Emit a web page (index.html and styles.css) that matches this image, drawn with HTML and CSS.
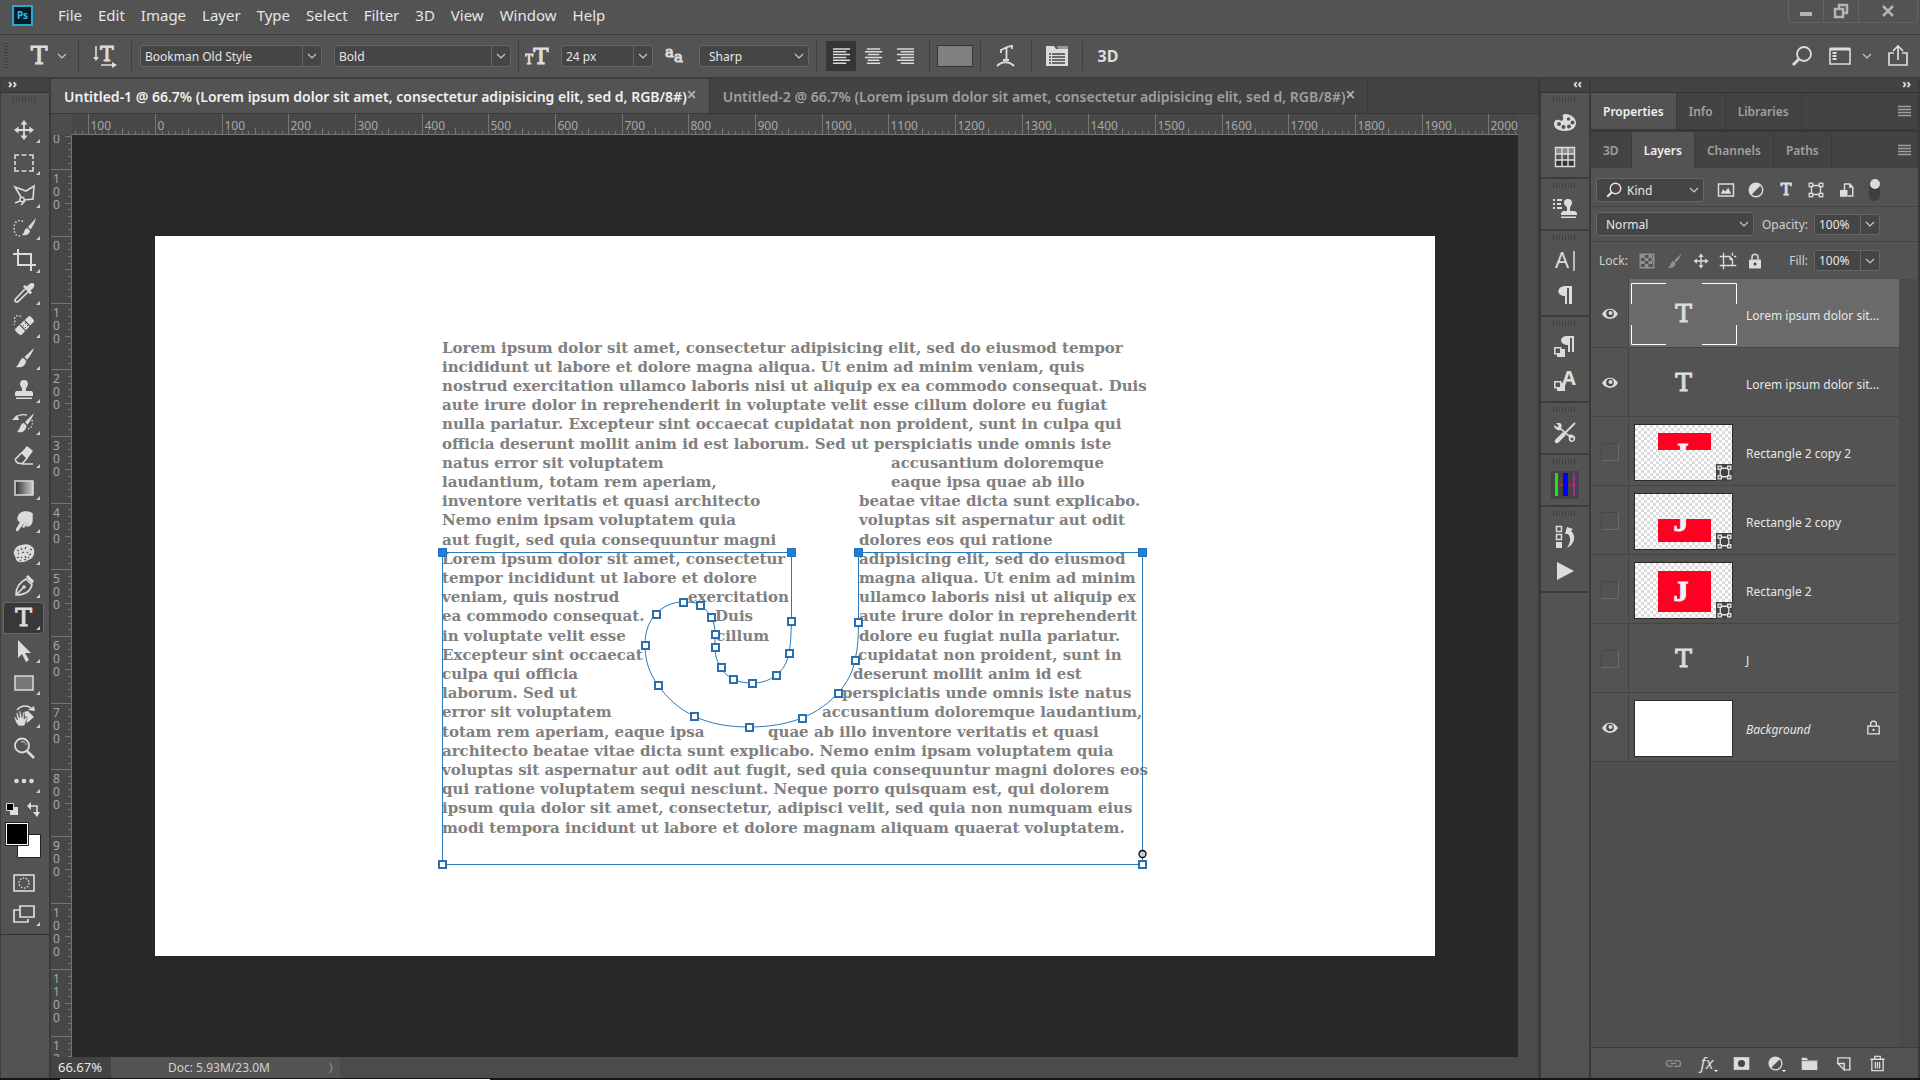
FILE: index.html
```html
<!DOCTYPE html>
<html lang="en">
<head>
    <meta charset="utf-8">
    <title>Untitled-1 - Photoshop</title>
    <link rel="stylesheet" href="styles.css">
</head>
<body>
    <!-- Icon sprite -->
    <svg class="sprite" aria-hidden="true">
        <symbol id="i-chev" viewBox="0 0 10 10"><path d="M1 3l4 4 4-4" fill="none" stroke="currentColor" stroke-width="1.2"/></symbol>
        <symbol id="i-menu" viewBox="0 0 14 12"><path d="M0 1.5h13M0 4.5h13M0 7.5h13M0 10.5h13" stroke="currentColor" stroke-width="1.6"/></symbol>
        <symbol id="i-move" viewBox="0 0 24 24"><path d="M12 4v16M4 12h16" stroke="currentColor" stroke-width="1.8"/><path d="M12 2l3.5 4.5h-7zM12 22l-3.500-4.500h7zM2 12l4.500-3.500v7zM22 12l-4.500 3.500v-7z" fill="currentColor"/></symbol>
        <symbol id="i-marquee" viewBox="0 0 24 24"><path d="M3 8V4h4M9.500 4h5M17 4h4v4M21 10v4M21 16v4h-4M14.500 20h-5M7 20H3v-4M3 14v-4" fill="none" stroke="currentColor" stroke-width="1.6"/></symbol>
        <symbol id="i-lasso" viewBox="0 0 24 24"><path d="M9 14L3 4l11 4 8-5-1 13-9 1M3 20l5-2M9 22l4-4" fill="none" stroke="currentColor" stroke-width="1.6"/><circle cx="10" cy="16.500" r="2.200" fill="none" stroke="currentColor" stroke-width="1.4"/></symbol>
        <symbol id="i-quick" viewBox="0 0 24 24"><path d="M11 5.500C6 3 2 6 2 12s3 10 8 7" fill="none" stroke="currentColor" stroke-width="1.400" stroke-dasharray="1.600 1.800"/><path d="M24 2l-8 9 2.500 2.500C21 10 23 6 24 2zM15 12c-3 1-2 4-5 7 4 1 8-1 8-4.500z" fill="currentColor"/></symbol>
        <symbol id="i-crop" viewBox="0 0 24 24"><path d="M1 6h18v17M6 1v16h18" fill="none" stroke="currentColor" stroke-width="2"/></symbol>
        <symbol id="i-dropper" viewBox="0 0 24 24"><path d="M13 8l-9.500 10c-1.500 2 .5 4 2.500 2.500L16 11" fill="none" stroke="currentColor" stroke-width="1.700"/><path d="M11 5.500l2-1.500 2 1.500C17 3 20 1 21.800 2.800S21 8 18.500 9.500l1.500 2-2 2z" fill="currentColor"/></symbol>
        <symbol id="i-heal" viewBox="0 0 24 24"><path d="M9 3.500C5 1 1 4 3 9l-1 3" fill="none" stroke="currentColor" stroke-width="1.300" stroke-dasharray="1.600 1.800"/><path d="M17 3c1-1 6 4.500 5 5.500L9.500 22C8 23 2 17.500 3 16z" fill="currentColor"/><path d="M8 12l6 6M12.500 7.500l6 6" stroke="#535353" stroke-width="1.200"/><path d="M11 12.500h1M13 10.500h1M13 14.500h1M15 12.500h1" stroke="#535353" stroke-width="1"/></symbol>
        <symbol id="i-brush" viewBox="0 0 24 24"><path d="M22 2l-9.500 9 2.500 2.800C18 10 21 6 22 2zM11.500 12c-4 .5-3 5-7.500 9 5 1 10-1 10-6.300z" fill="currentColor"/></symbol>
        <symbol id="i-stamp" viewBox="0 0 24 24"><path d="M8 6a4 4 0 1 1 8 0c0 2.500-2 3-2 5v2h5c1.500 0 2 1 2 2.500V18H3v-2.500C3 14 3.500 13 5 13h5v-2c0-2-2-2.500-2-5zM4 19.500h16V21H4z" fill="currentColor"/></symbol>
        <symbol id="i-history" viewBox="0 0 24 24"><path d="M22 2l-9 9 2.500 2.800C18 10 21 6 22 2zM12 12c-4 .5-3 5-7 9 5 1 9-1 9.500-6.300z" fill="currentColor"/><path d="M3 7c3-3 7-4 12-3" fill="none" stroke="currentColor" stroke-width="1.400"/><path d="M0 9l5-5 2 5z" fill="currentColor"/><path d="M20 9c1 4 0 8-4 9" fill="none" stroke="currentColor" stroke-width="1.300" stroke-dasharray="1.500 1.700"/></symbol>
        <symbol id="i-eraser" viewBox="0 0 24 24"><path d="M15 3l6 5-6 8-6-6z" fill="currentColor"/><path d="M10 9.500L3.500 16c-.8 2 2 4 4 4.500h3l5-6M10 21h11" fill="none" stroke="currentColor" stroke-width="1.600"/></symbol>
        <symbol id="i-gradient" viewBox="0 0 24 24"><linearGradient id="grad"><stop offset="0" stop-color="#333"/><stop offset="1" stop-color="#ccc"/></linearGradient><rect x="3" y="5" width="18" height="14" fill="url(#grad)" stroke="currentColor" stroke-width="1.500"/></symbol>
        <symbol id="i-smudge" viewBox="0 0 24 24"><path d="M8 4c3-3 12-2 13 1-1 5 1 7-2 11-2 2-4 2-5 1l4-5-6 7-2-1 4-6-8 10c-1 1-3-.5-2-2l4-7C4 12 5 7 8 4z" fill="currentColor"/></symbol>
        <symbol id="i-sponge" viewBox="0 0 24 24"><path d="M2 13c-1-4 3-9 8-9 4-2 10 0 12 4 1 5-1 10-6 11-5 4-12 2-12-1z" fill="currentColor"/><path d="M5 9l2 1M9 7l1 2M14 6l-1 2M18 8l2 1M6 13l1-1M10 12l2-1M15 11l1 1M19 13l-2 1M5 17l2-1M9 16l1 1M13 15l1 2M17 17l-1-1M8 19l1 1M12 19l2-1" stroke="#535353" stroke-width="1.300"/></symbol>
        <symbol id="i-pen" viewBox="0 0 24 24"><path d="M4 21C4 15 6 9 14 5l6 6c-2 7-7 10-16 10zM4 21l7-7" fill="none" stroke="currentColor" stroke-width="1.600"/><circle cx="12" cy="13" r="1.800" fill="currentColor"/><path d="M14 3l2-2 6 6-2 3z" fill="currentColor"/></symbol>
        <symbol id="i-arrow" viewBox="0 0 24 24"><path d="M6 1v18l4-4 4 8 3-2-4-7h6z" fill="currentColor"/></symbol>
        <symbol id="i-rect" viewBox="0 0 24 24"><rect x="3" y="5" width="18" height="14" fill="#777" stroke="currentColor" stroke-width="1.500"/></symbol>
        <symbol id="i-hand" viewBox="0 0 24 24"><path d="M5 6c4-5 10-5 14-2" fill="none" stroke="currentColor" stroke-width="1.500"/><path d="M16 6l6-4 1 5zM12 8l4-1 6 6-7 6-2-7z" fill="currentColor"/><path d="M7 22c-3-2-4-6-5-9l1-.5L5.500 16 4 9l1.500-.5L7.500 14 7 7l1.500-.3L10 13.500 10.500 8l1.500.2.200 7L14 12.500l1.200.5C14 18 13 22 11.500 22z" fill="currentColor" stroke="#535353" stroke-width=".6"/></symbol>
        <symbol id="i-zoom" viewBox="0 0 24 24"><circle cx="10" cy="9.500" r="7" fill="none" stroke="currentColor" stroke-width="1.800"/><path d="M15 15l7 7" stroke="currentColor" stroke-width="2.600"/><path d="M9 6c3-1 5 1 5 3" fill="none" stroke="currentColor"/></symbol>
        <symbol id="i-dots" viewBox="0 0 24 24"><g fill="currentColor"><circle cx="4.500" cy="12" r="2.300"/><circle cx="12" cy="12" r="2.300"/><circle cx="19.500" cy="12" r="2.300"/></g></symbol>
        <symbol id="i-mask" viewBox="0 0 24 24"><rect x="2" y="4" width="20" height="16" fill="none" stroke="currentColor" stroke-width="1.600"/><circle cx="12" cy="12" r="5" fill="none" stroke="currentColor" stroke-width="1.300" stroke-dasharray="1.600 1.500"/></symbol>
        <symbol id="i-screen" viewBox="0 0 24 24"><path d="M8 8H2v12h14v-3M8 4h14v11H8z" fill="none" stroke="currentColor" stroke-width="1.700"/></symbol>
        <symbol id="i-search" viewBox="0 0 24 24"><circle cx="14" cy="10" r="7" fill="none" stroke="currentColor" stroke-width="1.800"/><path d="M9 15l-6 6" stroke="currentColor" stroke-width="2.800"/></symbol>
        <symbol id="i-eye" viewBox="0 0 24 24"><path d="M4 12c4-7 12-7 16 0-4 6.500-12 6.500-16 0z" fill="currentColor"/><circle cx="12" cy="11.500" r="3.800" fill="#4a4a4a"/><circle cx="12.500" cy="11" r="2" fill="currentColor"/></symbol>
        <symbol id="i-transform" viewBox="0 0 24 24"><path d="M6 6h12v12H6z" fill="none" stroke="currentColor" stroke-width="1.800"/><g fill="#535353" stroke="currentColor" stroke-width="1.800"><rect x="3" y="3" width="4.500" height="4.500"/><rect x="16.500" y="3" width="4.500" height="4.500"/><rect x="3" y="16.500" width="4.500" height="4.500"/><rect x="16.500" y="16.500" width="4.500" height="4.500"/></g></symbol>
        <symbol id="i-image" viewBox="0 0 24 24"><rect x="2" y="4" width="20" height="16" fill="none" stroke="currentColor" stroke-width="2"/><path d="M5 17l3-6 3 3 4-5 4 8z" fill="currentColor"/></symbol>
        <symbol id="i-adjust" viewBox="0 0 24 24"><circle cx="12" cy="12" r="9" fill="none" stroke="currentColor" stroke-width="1.900"/><path d="M5.500 18.500A9 9 0 0 1 18.500 5.500z" fill="currentColor"/></symbol>
        <symbol id="i-smart" viewBox="0 0 24 24"><path d="M10 12V4h7l4 4v12h-7" fill="none" stroke="currentColor" stroke-width="1.900"/><path d="M16 3v6h5zM4 12h10v9H4z" fill="currentColor"/></symbol>
        <symbol id="i-checker" viewBox="0 0 24 24"><rect x="3" y="3" width="18" height="18" fill="none" stroke="currentColor" stroke-width="2"/><path d="M3 3h6v5H3zM14 3h5v5h-5zM9 8h5v4H9zM3 12h6v4H3zM14 12h5v4h-5zM9 16h5v5H9zM18 8h3v4h-3z" fill="currentColor"/></symbol>
        <symbol id="i-artboard" viewBox="0 0 24 24"><path d="M6 6v12h12V10l-4-4zM1 6h4M6 1v4M18 1v4M20 6h3M1 18h4M19 18h4M6 19v4" fill="none" stroke="currentColor" stroke-width="1.800"/><path d="M14 5v6h5z" fill="currentColor"/></symbol>
        <symbol id="i-lock" viewBox="0 0 24 24"><path d="M8 10V7a4 4 0 0 1 8 0v3" fill="none" stroke="currentColor" stroke-width="2"/><rect x="4" y="10" width="16" height="12" rx="1" fill="currentColor"/><circle cx="12" cy="16" r="2" fill="#444"/></symbol>
        <symbol id="i-lock-o" viewBox="0 0 24 24"><path d="M8 10V7a4 4 0 0 1 8 0v3M4 10h16v11H4z" fill="none" stroke="currentColor" stroke-width="1.800"/><circle cx="12" cy="15.500" r="1.600" fill="currentColor"/></symbol>
        <symbol id="i-palette" viewBox="0 0 24 24"><path d="M12 3c6 0 11 4 11 9s-5 8-11 8C5 20 1 17 1 13c0-3 2-5 5-4 3 2 5 0 4-3-1-1 0-3 2-3z" fill="currentColor"/><g fill="#535353"><circle cx="6" cy="13" r="2"/><circle cx="10.500" cy="16" r="2"/><circle cx="16" cy="15.500" r="2"/><circle cx="19.500" cy="11.500" r="2"/><circle cx="15.500" cy="8" r="1.800"/></g></symbol>
        <symbol id="i-swatches" viewBox="0 0 24 24"><path d="M3 3h18v6H3z" fill="#888"/><path d="M3 15h18v6H3z" fill="#333"/><path d="M2.500 2.500h19v19h-19zM9 2v20M15 2v20M2 9h20M2 15h20" fill="none" stroke="currentColor" stroke-width="1.400"/></symbol>
        <symbol id="i-clone" viewBox="0 0 24 24"><path d="M11 6a4 4 0 1 1 8 0c0 2.500-2 3-2 5v3h5l2 2v2H8v-2l2-2h4v-3c0-2-3-2.500-3-5zM8 19.500h15V21H8z" fill="currentColor"/><path d="M0 3h2M0 7h2M0 11h2M4 3h5M4 7h4M4 11h5" stroke="currentColor" stroke-width="2"/></symbol>
        <symbol id="i-para" viewBox="0 0 24 24"><path d="M13 3h6v18h-3V5h-2v16h-2v-8c-9 0-9-10 1-10z" fill="currentColor"/></symbol>
        <symbol id="i-parastyle" viewBox="0 0 24 24"><path d="M14 1h7v16h-2V3h-2v14h-2v-7c-9 0-9-9-1-9zM7 14h5v8H4v-3h3z" fill="currentColor"/><path d="M1.800 12.800h6v6h-6z" fill="#535353" stroke="currentColor" stroke-width="1.500"/></symbol>
        <symbol id="i-tools" viewBox="0 0 24 24"><path d="M3 2l4 0c2 1 2 4 1 5l8 7c2-1 5 0 6 2s-1 5-3 5-4-2-3-5L8 9C5 10 1 8 1 4l3 2 2-1z" fill="currentColor"/><circle cx="19" cy="18" r="1.500" fill="#535353"/><path d="M22 2L11 13" stroke="currentColor" stroke-width="1.800"/><path d="M10 11l3 3-8 8c-2 1-4-1-3-3z" fill="currentColor"/></symbol>
        <symbol id="i-plugin" viewBox="0 0 28 28"><rect width="28" height="28" fill="#444"/><path d="M5.500 2v23" stroke="#1fe01f" stroke-width="3"/><path d="M14.500 2v23" stroke="#00f" stroke-width="5"/><path d="M23 2v23" stroke="#a02ba0" stroke-width="2"/><path d="M8 14h4M18 14h4" stroke="#e01030" stroke-width="2"/></symbol>
        <symbol id="i-undo" viewBox="0 0 24 24"><path d="M3.500 1.500h5v5h-5zM3.500 9.500h5v5h-5z" fill="none" stroke="currentColor" stroke-width="1.500"/><path d="M3 17h6v6H3zM12 9l2-7 6 2-2 2c6 5 3 14-4 17 4-6 4-11 1-14z" fill="currentColor"/></symbol>
        <symbol id="i-play" viewBox="0 0 24 24"><path d="M4 3l17 9-17 9z" fill="currentColor"/></symbol>
        <symbol id="i-link" viewBox="0 0 24 24"><path d="M11 8H6a4 4 0 0 0 0 8h5M13 8h5a4 4 0 0 1 0 8h-5M8 12h8" fill="none" stroke="currentColor" stroke-width="1.900"/></symbol>
        <symbol id="i-addmask" viewBox="0 0 24 24"><path d="M1 3h22v18H1z" fill="currentColor"/><circle cx="12" cy="12" r="5" fill="#444"/></symbol>
        <symbol id="i-folder" viewBox="0 0 24 24"><path d="M1 4h7l2 3h13v14H1z" fill="currentColor"/><path d="M1 8h22" stroke="#535353"/></symbol>
        <symbol id="i-new" viewBox="0 0 24 24"><path d="M4 11V4h17v17h-7" fill="none" stroke="currentColor" stroke-width="2"/><path d="M4 12h9v9z" fill="none" stroke="currentColor" stroke-width="2"/></symbol>
        <symbol id="i-trash" viewBox="0 0 24 24"><path d="M2 6h20M8 5V2h8v3M4 7v15h16V7M9 10v9M12 10v9M15 10v9" fill="none" stroke="currentColor" stroke-width="1.800"/></symbol>
    </svg>

    <header class="menubar">
        <span class="ps-logo">Ps</span>
        <nav class="menus">
            <a href="#">File</a><a href="#">Edit</a><a href="#">Image</a><a href="#">Layer</a><a href="#">Type</a><a href="#">Select</a><a href="#">Filter</a><a href="#">3D</a><a href="#">View</a><a href="#">Window</a><a href="#">Help</a>
        </nav>
        <div class="window-buttons">
            <button aria-label="Minimize"><svg viewBox="0 0 16 16"><path d="M2 11h12" stroke="currentColor" stroke-width="4"/></svg></button>
            <button aria-label="Restore"><svg viewBox="0 0 16 16"><path d="M6 5V2h8v8h-3M2 6h8v8H2z" fill="none" stroke="currentColor" stroke-width="2.500"/></svg></button>
            <button class="close" aria-label="Close"><svg viewBox="0 0 16 16"><path d="M3 3l10 10M13 3L3 13" stroke="currentColor" stroke-width="2.500"/></svg></button>
        </div>
    </header>

    <div class="options">
        <span class="grip-v"></span>
        <button class="opt tool-preset" aria-label="Type tool"><span class="glyph">T</span><svg class="chev"><use href="#i-chev"/></svg></button>
        <span class="sep"></span>
        <button class="opt orient" aria-label="Toggle text orientation"><svg class="i24" viewBox="0 0 24 24"><text x="14" y="17" text-anchor="middle" class="icon-t" font-size="20">T</text><path d="M3 2v13M8 21h13" stroke="currentColor" stroke-width="1.600"/><path d="M0 13h6l-3 4zM19 18l5 3-5 3z" fill="currentColor"/></svg></button>
        <span class="sep"></span>
        <span class="drop split w-font"><select aria-label="Font family"><option>Bookman Old Style</option></select><svg class="chev"><use href="#i-chev"/></svg></span>
        <span class="drop split w-style"><select aria-label="Font style"><option>Bold</option></select><svg class="chev"><use href="#i-chev"/></svg></span>
        <span class="sep"></span>
        <svg class="i24" viewBox="0 0 24 24"><text x="16" y="20" text-anchor="middle" class="icon-t" font-size="23">T</text><text x="4" y="20" text-anchor="middle" class="icon-t" font-size="12">T</text></svg>
        <span class="drop split w-size"><select aria-label="Font size"><option>24 px</option></select><svg class="chev"><use href="#i-chev"/></svg></span>
        <svg class="i24" viewBox="0 0 24 24"><text x="2" y="13" class="icon-t" font-size="15">a</text><text x="11" y="18" class="icon-t" font-size="15">a</text></svg>
        <span class="drop w-aa"><select aria-label="Anti-aliasing"><option>Sharp</option></select><svg class="chev"><use href="#i-chev"/></svg></span>
        <span class="sep"></span>
        <span class="aligns">
            <button class="opt active" aria-label="Left align"><svg viewBox="0 0 20 20"><path d="M1 2h18M1 5h14M1 8h18M1 11h14M1 14h18M1 17h14" stroke="currentColor" stroke-width="1.600"/></svg></button>
            <button class="opt" aria-label="Center"><svg viewBox="0 0 20 20"><path d="M3 2h14M1 5h18M4 8h12M1 11h18M4 14h12M3 17h14" stroke="currentColor" stroke-width="1.600"/></svg></button>
            <button class="opt" aria-label="Right align"><svg viewBox="0 0 20 20"><path d="M1 2h18M5 5h14M1 8h18M5 11h14M1 14h18M5 17h14" stroke="currentColor" stroke-width="1.600"/></svg></button>
        </span>
        <span class="sep"></span>
        <button class="color-well" aria-label="Text color"></button>
        <span class="sep"></span>
        <button class="opt mid" aria-label="Warp text"><svg class="i24" viewBox="0 0 24 24"><path d="M7 6c3-1 6-4 11-4M12.500 3v13M9 16h6M3 22c5-5 12-5 17 0M7 5v4M18 1v4" fill="none" stroke="currentColor" stroke-width="1.800"/></svg></button>
        <span class="sep"></span>
        <button class="opt mid" aria-label="Character panel"><svg class="i24" viewBox="0 0 24 24"><path d="M1 2h8l2 3h12v17H1z" fill="currentColor"/><path d="M12 2h11v3H13z" fill="#999"/><path d="M4 10h2M4 13h2M4 16h2M4 19h2M7 10h13M7 13h13M7 16h13M7 19h13" stroke="#444" stroke-width="1.400"/></svg></button>
        <span class="sep"></span>
        <button class="opt mid three-d">3D</button>
        <span class="options-right">
            <button class="opt" aria-label="Search"><svg class="i24"><use href="#i-search"/></svg></button>
            <button class="opt workspace" aria-label="Workspace"><svg class="i24" viewBox="0 0 24 24"><path d="M2 5h20v15H2z" fill="none" stroke="currentColor" stroke-width="1.600"/><path d="M2 5h20" stroke="currentColor" stroke-width="3"/><path d="M6.500 8v9" stroke="currentColor" stroke-width="4" stroke-dasharray="2 1"/></svg><svg class="chev"><use href="#i-chev"/></svg></button>
            <button class="opt" aria-label="Share"><svg class="i24" viewBox="0 0 24 24"><path d="M8 9H3v12h18V9h-5M12 16V3M7 7l5-5 5 5" fill="none" stroke="currentColor" stroke-width="1.700"/></svg></button>
        </span>
    </div>

    <main class="workspace-area">
        <aside class="toolbox">
            <div class="dock-head left">››</div>
            <div class="grip"></div>
            <div class="tools">
                <button aria-label="Move"><svg class="i24"><use href="#i-move"/></svg></button>
                <button aria-label="Marquee"><svg class="i24"><use href="#i-marquee"/></svg></button>
                <button aria-label="Lasso"><svg class="i24"><use href="#i-lasso"/></svg></button>
                <button aria-label="Quick selection"><svg class="i24"><use href="#i-quick"/></svg></button>
                <button aria-label="Crop"><svg class="i24"><use href="#i-crop"/></svg></button>
                <button aria-label="Eyedropper"><svg class="i24"><use href="#i-dropper"/></svg></button>
                <button aria-label="Healing brush"><svg class="i24"><use href="#i-heal"/></svg></button>
                <button aria-label="Brush"><svg class="i24"><use href="#i-brush"/></svg></button>
                <button aria-label="Clone stamp"><svg class="i24"><use href="#i-stamp"/></svg></button>
                <button aria-label="History brush"><svg class="i24"><use href="#i-history"/></svg></button>
                <button aria-label="Eraser"><svg class="i24"><use href="#i-eraser"/></svg></button>
                <button aria-label="Gradient"><svg class="i24"><use href="#i-gradient"/></svg></button>
                <button aria-label="Smudge"><svg class="i24"><use href="#i-smudge"/></svg></button>
                <button aria-label="Sponge"><svg class="i24"><use href="#i-sponge"/></svg></button>
                <button aria-label="Pen"><svg class="i24"><use href="#i-pen"/></svg></button>
                <button class="active" aria-label="Type"><span class="glyph">T</span></button>
                <button aria-label="Path selection"><svg class="i24"><use href="#i-arrow"/></svg></button>
                <button aria-label="Rectangle"><svg class="i24"><use href="#i-rect"/></svg></button>
                <button aria-label="Rotate view"><svg class="i24"><use href="#i-hand"/></svg></button>
                <button class="plain" aria-label="Zoom"><svg class="i24"><use href="#i-zoom"/></svg></button>
                <button aria-label="Edit toolbar"><svg class="i24"><use href="#i-dots"/></svg></button>
            </div>
            <svg class="swatches" viewBox="0 0 48 70" aria-label="Foreground and background colors">
                <path d="M9 10h8v8H9z" fill="#ddd"/><path d="M5.500 6.500h7v7h-7z" fill="#000" stroke="#ddd"/>
                <path d="M29 9h7v8" fill="none" stroke="#ddd" stroke-width="1.600"/><path d="M30 5v8l-4-4zM32 15h7l-3 5z" fill="#ddd"/>
                <path d="M16.500 37.500h23v23h-23z" fill="#fff" stroke="#222"/>
                <path d="M4.500 25.500h23v23h-23z" fill="#fff" stroke="#222"/><path d="M6 27h20v20H6z" fill="#000"/>
            </svg>
            <div class="modes">
                <button class="plain" aria-label="Quick mask"><svg class="i24"><use href="#i-mask"/></svg></button>
                <button aria-label="Screen mode"><svg class="i24"><use href="#i-screen"/></svg></button>
            </div>
        </aside>

        <section class="document">
            <div class="doc-tabs">
                <div class="doc-tab active"><span>Untitled-1 @ 66.7% (Lorem ipsum dolor sit amet, consectetur adipisicing elit, sed d, RGB/8#)</span><button aria-label="Close tab">×</button></div>
                <div class="doc-tab"><span>Untitled-2 @ 66.7% (Lorem ipsum dolor sit amet, consectetur adipisicing elit, sed d, RGB/8#)</span><button aria-label="Close tab">×</button></div>
            </div>
            <div class="view">
                <div class="ruler-corner"></div>
                <svg class="ruler ruler-x" id="rulerX"></svg>
                <div class="scroll-gutter"></div>
                <svg class="ruler ruler-y" id="rulerY"></svg>
                <div class="pasteboard" id="pasteboard">
                    <svg class="artboard" id="artboard" width="1280" height="720" viewBox="0 0 1280 720">
                        <g id="copy" class="copy"></g>
                        <path class="text-path" d="M287.500 316.500H636.500V385C636 396 636 407 634 417C632 427 628 434 621 439C614 445 606 447 597 447C590 447 584 446 578 443C572 440 568 436 566 431C561 424 560 418 560 411V398C560 391 559 386 556 381C553 376 549 371 545 369C540 366 534 366 528 366C518 366 508 370 501 378C493 386 490 397 490 409C490 424 494 437 503 449C512 462 524 473 539 480C555 488 574 491 594 491C614 491 632 488 647 482C662 476 674 467 683 457C692 447 698 436 700 424C703 412 703.500 399 703.500 386V316.500H987.500V628.500H287.500Z"/>
                        <g id="handles"></g>
                        <circle cx="987.500" cy="618" r="3.500" fill="#ccc" stroke="#000" stroke-width="1.300"/>
                    </svg>
                </div>
            </div>
            <div class="statusbar">
                <input class="zoom-level" aria-label="Zoom level" value="66.67%">
                <div class="doc-info"><span>Doc: 5.93M/23.0M</span><button aria-label="More info">〉</button></div>
            </div>
        </section>

        <aside class="icon-dock">
            <div class="dock-head right">‹‹</div>
            <div class="dock-group"><div class="grip"></div><button aria-label="Color"><svg class="i24"><use href="#i-palette"/></svg></button><button aria-label="Swatches"><svg class="i24"><use href="#i-swatches"/></svg></button></div>
            <div class="dock-group"><div class="grip"></div><button aria-label="Clone source"><svg class="i24"><use href="#i-clone"/></svg></button></div>
            <div class="dock-group"><div class="grip"></div><button aria-label="Character"><svg class="i24" viewBox="0 0 24 24"><text x="9" y="19" text-anchor="middle" font-size="22" fill="currentColor">A</text><path d="M21 2v20" stroke="currentColor" stroke-width="1.500"/></svg></button><button aria-label="Paragraph"><svg class="i24"><use href="#i-para"/></svg></button></div>
            <div class="dock-group"><div class="grip"></div><button aria-label="Paragraph styles"><svg class="i24"><use href="#i-parastyle"/></svg></button><button aria-label="Character styles"><svg class="i24" viewBox="0 0 24 24"><text x="16" y="16" text-anchor="middle" font-weight="bold" font-size="20" fill="currentColor">A</text><path d="M7 14h5v8H4v-3h3z" fill="currentColor"/><path d="M1.800 12.800h6v6h-6z" fill="#535353" stroke="currentColor" stroke-width="1.500"/></svg></button></div>
            <div class="dock-group"><div class="grip"></div><button aria-label="Tool presets"><svg class="i24"><use href="#i-tools"/></svg></button></div>
            <div class="dock-group"><div class="grip"></div><button aria-label="Extension"><svg class="i28"><use href="#i-plugin"/></svg></button></div>
            <div class="dock-group"><div class="grip"></div><button aria-label="History"><svg class="i24"><use href="#i-undo"/></svg></button><button aria-label="Actions"><svg class="i24"><use href="#i-play"/></svg></button></div>
        </aside>

        <aside class="panels">
            <div class="dock-head right">››</div>
            <div class="tabs first">
                <button class="active">Properties</button><button>Info</button><button>Libraries</button>
                <button class="flyout" aria-label="Panel menu"><svg><use href="#i-menu"/></svg></button>
            </div>
            <div class="tabs">
                <button>3D</button><button class="active">Layers</button><button>Channels</button><button>Paths</button>
                <button class="flyout" aria-label="Panel menu"><svg><use href="#i-menu"/></svg></button>
            </div>
            <div class="panel-row filters">
                <span class="drop w-kind"><svg class="lens"><use href="#i-search"/></svg><select aria-label="Filter type"><option>Kind</option></select><svg class="chev"><use href="#i-chev"/></svg></span>
                <span class="filter-icons">
                    <button aria-label="Pixel layers"><svg><use href="#i-image"/></svg></button>
                    <button aria-label="Adjustment layers"><svg><use href="#i-adjust"/></svg></button>
                    <button aria-label="Type layers"><span class="glyph small">T</span></button>
                    <button aria-label="Shape layers"><svg><use href="#i-transform"/></svg></button>
                    <button aria-label="Smart objects"><svg><use href="#i-smart"/></svg></button>
                </span>
                <button class="toggle" aria-label="Toggle filtering"></button>
            </div>
            <div class="panel-row">
                <span class="drop w-blend"><select aria-label="Blend mode"><option>Normal</option></select><svg class="chev"><use href="#i-chev"/></svg></span>
                <span class="amount"><label for="opacity">Opacity:</label><span class="combo"><input id="opacity" value="100%"><button aria-label="Opacity slider"><svg class="chev"><use href="#i-chev"/></svg></button></span></span>
            </div>
            <div class="panel-row locks">
                <span class="lock-label">Lock:</span>
                <button class="dim" aria-label="Lock transparency"><svg><use href="#i-checker"/></svg></button>
                <button class="dim" aria-label="Lock pixels"><svg><use href="#i-brush"/></svg></button>
                <button aria-label="Lock position"><svg><use href="#i-move"/></svg></button>
                <button aria-label="Lock artboard"><svg><use href="#i-artboard"/></svg></button>
                <button aria-label="Lock all"><svg><use href="#i-lock"/></svg></button>
                <span class="amount"><label for="fill">Fill:</label><span class="combo"><input id="fill" value="100%"><button aria-label="Fill slider"><svg class="chev"><use href="#i-chev"/></svg></button></span></span>
            </div>
            <div class="layers-wrap">
                <ul class="layers">
                    <li class="selected">
                        <button class="eye" aria-label="Toggle visibility"><svg class="i24"><use href="#i-eye"/></svg></button>
                        <span class="thumb type-thumb"><svg class="frame" viewBox="0 0 106 62" fill="none" stroke="#fff"><path d="M.5 21V.5H35M71 .5h34.500V21M.5 42v19.500H35M71 61.500h34.500V42"/></svg><span class="glyph">T</span></span>
                        <span class="name">Lorem ipsum dolor sit...</span>
                    </li>
                    <li>
                        <button class="eye" aria-label="Toggle visibility"><svg class="i24"><use href="#i-eye"/></svg></button>
                        <span class="thumb type-thumb"><span class="glyph">T</span></span>
                        <span class="name">Lorem ipsum dolor sit...</span>
                    </li>
                    <li>
                        <button class="eye off" aria-label="Toggle visibility"></button>
                        <span class="thumb"><svg class="shape" viewBox="0 0 97 55"><path d="M23 8h53v17H23z" fill="#ff0022"/><svg width="97" height="25"><text x="46" y="38" class="thumb-j">J</text></svg></svg><svg class="badge"><use href="#i-transform"/></svg></span>
                        <span class="name">Rectangle 2 copy 2</span>
                    </li>
                    <li>
                        <button class="eye off" aria-label="Toggle visibility"></button>
                        <span class="thumb"><svg class="shape" viewBox="0 0 97 55"><path d="M23 25h53v23H23z" fill="#ff0022"/><svg y="25" width="97" height="30"><text x="46" y="12" class="thumb-j">J</text></svg></svg><svg class="badge"><use href="#i-transform"/></svg></span>
                        <span class="name">Rectangle 2 copy</span>
                    </li>
                    <li>
                        <button class="eye off" aria-label="Toggle visibility"></button>
                        <span class="thumb"><svg class="shape" viewBox="0 0 97 55"><path d="M23 8h53v41H23z" fill="#ff0022"/><text x="46" y="38" class="thumb-j">J</text></svg><svg class="badge"><use href="#i-transform"/></svg></span>
                        <span class="name">Rectangle 2</span>
                    </li>
                    <li>
                        <button class="eye off" aria-label="Toggle visibility"></button>
                        <span class="thumb type-thumb"><span class="glyph">T</span></span>
                        <span class="name">J</span>
                    </li>
                    <li>
                        <button class="eye" aria-label="Toggle visibility"><svg class="i24"><use href="#i-eye"/></svg></button>
                        <span class="thumb blank"></span>
                        <span class="name"><em>Background</em></span>
                        <svg class="layer-lock"><use href="#i-lock-o"/></svg>
                    </li>
                </ul>
                <div class="layers-gutter"></div>
            </div>
            <div class="panel-foot">
                <button class="dim" aria-label="Link layers"><svg><use href="#i-link"/></svg></button>
                <button class="more fx" aria-label="Layer style"><i>fx</i></button>
                <button aria-label="Add mask"><svg><use href="#i-addmask"/></svg></button>
                <button class="more" aria-label="New adjustment layer"><svg><use href="#i-adjust"/></svg></button>
                <button aria-label="New group"><svg><use href="#i-folder"/></svg></button>
                <button aria-label="New layer"><svg><use href="#i-new"/></svg></button>
                <button aria-label="Delete layer"><svg><use href="#i-trash"/></svg></button>
            </div>
        </aside>
    </main>
    <div class="taskbar-edge"><span></span></div>

    <script src="script.js"></script>
</body>
</html>
```

FILE: styles.css
```css
* {
    box-sizing: border-box;
}
body {
    margin: 0;
    height: 100vh;
    display: flex;
    flex-direction: column;
    overflow: hidden;
    background-color: #535353;
    color: #e6e6e6;
    font-family: "Noto Sans", "Open Sans", sans-serif;
    font-size: 13px;
}
button {
    display: flex;
    align-items: center;
    justify-content: center;
    padding: 0;
    border: none;
    background: none;
    color: #dcdcdc;
    font: inherit;
}
svg {
    display: block;
    flex: none;
}
.sprite {
    position: absolute;
    width: 0;
    height: 0;
}
.i24 {
    width: 24px;
    height: 24px;
}
.i28 {
    width: 28px;
    height: 28px;
}
.chev {
    width: 10px;
    height: 10px;
    color: #c8c8c8;
}
.glyph {
    color: #dcdcdc;
    font-family: "DejaVu Serif", serif;
    font-size: 25px;
    line-height: 30px;
    -webkit-text-stroke: 1px #dcdcdc;
}
.glyph.small {
    font-size: 16px;
    line-height: 20px;
}
.icon-t {
    fill: currentColor;
    stroke: currentColor;
    font-family: "DejaVu Serif", serif;
}

/* Menu bar */
.menubar {
    display: flex;
    align-items: center;
    flex: none;
    height: 35px;
    padding: 0 2px 4px 12px;
    border-bottom: 1px solid #3c3c3c;
}
.ps-logo {
    width: 21px;
    height: 21px;
    border: 2px solid #2ea6c9;
    background-color: #001d26;
    color: #2fc1ee;
    font-size: 10px;
    font-weight: bold;
    line-height: 16px;
    text-align: center;
}
.menus {
    display: flex;
    gap: 16px;
    margin-left: 25px;
    font-size: 15px;
}
.menus a {
    color: #e6e6e6;
    text-decoration: none;
}
.window-buttons {
    display: flex;
    align-self: flex-start;
    margin-left: auto;
    height: 23px;
    border: 1px solid #636363;
    border-top: none;
    border-radius: 0 0 4px 4px;
}
.window-buttons button {
    width: 35px;
    border-right: 1px solid #636363;
    color: #b4b4b4;
}
.window-buttons .close {
    width: 58px;
    border-right: none;
}
.window-buttons svg {
    width: 16px;
    height: 16px;
}

/* Options bar */
.options {
    display: flex;
    align-items: center;
    flex: none;
    height: 44px;
    padding: 0 10px 0 4px;
    border-bottom: 2px solid #3e3e3e;
    color: #dcdcdc;
}
.grip-v {
    width: 4px;
    height: 26px;
    background: repeating-linear-gradient(#3e3e3e 0 1px, transparent 1px 3px);
}
.sep {
    width: 1px;
    height: 30px;
    background-color: #3e3e3e;
}
.tool-preset {
    width: 70px;
    padding-left: 12px;
    gap: 10px;
}
.orient {
    width: 52px;
}
.drop {
    display: flex;
    align-items: center;
    height: 22px;
    padding-right: 4px;
    border: 1px solid #666;
    border-radius: 3px;
    background-color: #454545;
}
.drop select {
    flex: 1;
    min-width: 0;
    height: 100%;
    padding: 0 0 0 4px;
    border: none;
    appearance: none;
    background: none;
    color: #e6e6e6;
    font: inherit;
    font-size: 12px;
}
.split select {
    margin-right: 4px;
    border-right: 1px solid #666;
}
.w-font {
    width: 182px;
    margin: 0 12px 0 8px;
}
.w-style {
    width: 177px;
    margin-right: 7px;
}
.w-size {
    width: 92px;
    margin: 0 10px 0 12px;
}
.options > .sep + .i24 {
    margin-left: 6px;
}
.w-aa {
    width: 110px;
    margin: 0 7px 0 12px;
}
.w-aa select {
    padding-left: 9px;
}
.aligns {
    display: flex;
    gap: 2px;
    padding: 0 9px;
}
.aligns .opt {
    width: 30px;
    height: 30px;
}
.aligns .active {
    background-color: #363636;
}
.aligns svg {
    width: 19px;
    height: 19px;
}
.color-well {
    width: 36px;
    height: 22px;
    margin: 0 7px;
    border: 1px solid #333;
    background-color: #808080;
}
.mid {
    width: 50px;
}
.three-d {
    font-size: 16px;
    font-weight: bold;
}
.options-right {
    display: flex;
    align-items: center;
    gap: 14px;
    margin-left: auto;
}
.workspace {
    gap: 10px;
}

/* Docks */
.workspace-area {
    display: flex;
    flex: 1;
    min-height: 0;
    background-color: #3a3a3a;
}
.dock-head {
    flex: none;
    height: 14px;
    padding: 0 7px;
    background-color: #434343;
    border-bottom: 1px solid #333;
    font-size: 12px;
    font-weight: bold;
    line-height: 10px;
}
.dock-head.right {
    text-align: right;
}
.grip {
    width: 24px;
    height: 5px;
    margin: 4px auto;
    background: repeating-linear-gradient(90deg, #404040 0 1px, transparent 1px 3px);
}
.toolbox {
    width: 49px;
    background-color: #535353;
    margin-right: 2px;
    border-left: 1px solid #3e3e3e;
}
.tools {
    display: grid;
    grid-auto-rows: 1fr;
    height: 683px;
    margin-top: 12px;
}
.tools button,
.modes button {
    position: relative;
    width: 39px;
    margin: 1px 3px;
    border-radius: 2px;
}
.tools button::after,
.modes button::after {
    content: "";
    position: absolute;
    right: 3px;
    bottom: 3px;
    border: 2px solid transparent;
    border-right-color: #ccc;
    border-bottom-color: #ccc;
}
.tools .plain::after,
.modes .plain::after {
    display: none;
}
.tools .active {
    background-color: #383838;
    outline: 1px solid #666;
}
.swatches {
    width: 48px;
    height: 70px;
}
.modes {
    padding-bottom: 4px;
    border-bottom: 1px solid #333;
}
.modes button {
    height: 30px;
}

/* Document */
.document {
    display: flex;
    flex-direction: column;
    flex: 1;
    min-width: 0;
    background-color: #434343;
}
.doc-tabs {
    display: flex;
    flex: none;
    height: 35px;
    border-bottom: 1px solid #383838;
}
.doc-tab {
    display: flex;
    align-items: center;
    padding: 0 12px 0 13px;
    border-right: 1px solid #383838;
    color: #a0a0a0;
    font-size: 14px;
    font-weight: 600;
    white-space: nowrap;
}
.doc-tab.active {
    background-color: #535353;
    color: #f0f0f0;
}
.doc-tab button {
    width: 10px;
    height: 18px;
    padding-bottom: 4px;
    color: #b4b4b4;
    font-size: 17px;
}
.view {
    display: grid;
    grid-template-columns: 21px 1fr 20px;
    grid-template-rows: 21px 1fr;
    flex: 1;
    min-height: 0;
}
.ruler-corner {
    background-color: #4d4d4d;
}
.ruler {
    width: 100%;
    height: 100%;
    overflow: hidden;
    background-color: #474747;
}
.ruler text {
    fill: #a8a8a8;
    font-size: 12px;
}
.ruler path {
    fill: none;
    stroke: #757575;
    shape-rendering: crispEdges;
}
.scroll-gutter {
    grid-column: 3;
    grid-row: 1 / 3;
    background-color: #4b4b4b;
}
.ruler-y {
    grid-column: 1;
    grid-row: 2;
}
.pasteboard {
    display: flex;
    align-items: center;
    justify-content: center;
    min-width: 0;
    min-height: 0;
    overflow: hidden;
    background-color: #282828;
}
.artboard {
    background-color: #fff;
}
.copy {
    fill: #808080;
    font-family: "DejaVu Serif", serif;
    font-size: 15px;
    font-weight: bold;
}
.text-path {
    fill: none;
    stroke: #2a7ab8;
}
.handle {
    fill: #fff;
    stroke: #2a70b0;
    stroke-width: 2;
}
.handle.corner {
    fill: #1a80e6;
    stroke-width: 1;
}
.statusbar {
    display: flex;
    flex: none;
    height: 21px;
    background-color: #4b4b4b;
}
.zoom-level {
    width: 60px;
    padding: 0 0 2px 7px;
    border: none;
    background-color: #434343;
    color: #e6e6e6;
    font: inherit;
}
.doc-info {
    display: flex;
    align-items: center;
    justify-content: space-between;
    width: 229px;
    padding-left: 57px;
    background-color: #535353;
    color: #d2d2d2;
    font-size: 12px;
}

/* Icon strip */
.icon-dock {
    width: 48px;
    margin: 0 2px 0 3px;
    background-color: #535353;
}
.dock-group {
    padding-bottom: 3px;
    border-bottom: 2px solid #3c3c3c;
}
.dock-group button {
    width: 100%;
    height: 34px;
}
.dock-group .grip {
    margin-bottom: 4px;
}

/* Panels */
.panels {
    display: flex;
    flex-direction: column;
    width: 327px;
    margin-right: 2px;
    background-color: #535353;
}
.tabs {
    display: flex;
    flex: none;
    height: 36px;
    background-color: #434343;
}
.tabs.first {
    height: 39px;
    border-bottom: 3px solid #383838;
}
.tabs button {
    padding: 0 12px;
    border-right: 1px solid #3a3a3a;
    color: #a0a0a0;
    font-size: 12px;
    font-weight: 600;
}
.tabs .active {
    background-color: #535353;
    color: #f0f0f0;
}
.tabs .flyout {
    margin-left: auto;
    padding: 0 6px 0 0;
    border: none;
}
.flyout svg {
    width: 14px;
    height: 12px;
}
.panel-row {
    display: flex;
    align-items: center;
    flex: none;
    height: 35px;
    padding: 0 38px 0 5px;
    border-bottom: 1px solid #444;
}
.panel-row svg:not(.chev) {
    width: 18px;
    height: 18px;
}
.panel-row .lens {
    margin-left: 8px;
}
.panel-row.filters {
    height: 39px;
    padding-top: 6px;
}
.panel-row.locks {
    height: 37px;
    padding-left: 8px;
    border: none;
}
.w-kind {
    width: 108px;
    height: 24px;
}
.w-blend {
    width: 158px;
    height: 24px;
}
.w-blend select {
    padding-left: 9px;
}
.filter-icons {
    display: flex;
    gap: 12px;
    margin-left: 13px;
}
.filter-icons button {
    width: 18px;
}
.toggle {
    align-items: flex-start;
    width: 11px;
    height: 22px;
    margin-left: auto;
    border-radius: 6px;
    background-color: #3f3f3f;
}
.toggle::before {
    content: "";
    width: 10px;
    height: 10px;
    border-radius: 50%;
    background-color: #dcdcdc;
}
.amount {
    display: flex;
    align-items: center;
    gap: 6px;
    margin-left: auto;
    color: #d0d0d0;
    font-size: 12px;
}
.combo {
    display: flex;
    width: 66px;
    height: 21px;
    border: 1px solid #666;
    border-radius: 2px;
    background-color: #454545;
}
.combo input {
    width: 46px;
    padding: 0 0 0 4px;
    border: none;
    border-right: 1px solid #666;
    background: none;
    color: #e6e6e6;
    font: inherit;
}
.combo button {
    flex: 1;
}
.lock-label {
    width: 38px;
    color: #d0d0d0;
    font-size: 12px;
}
.locks button {
    width: 19px;
    margin-right: 8px;
}
.locks .combo button {
    margin: 0;
}
.locks .dim,
.panel-foot .dim {
    color: #909090;
}
.layers-wrap {
    display: flex;
    flex: 1;
    min-height: 0;
    background-color: #4f4f4f;
}
.layers {
    flex: 1;
    margin: 0;
    padding: 0;
    list-style: none;
}
.layers li {
    display: flex;
    align-items: center;
    height: 69px;
    border-bottom: 1px solid #444;
    background-color: #535353;
}
.layers .selected {
    background-color: #6a6a6a;
}
.eye {
    width: 38px;
    height: 100%;
    padding-top: 2px;
    border-right: 1px solid #444;
    background-color: #535353;
}
.eye.off::before {
    content: "";
    width: 16px;
    height: 16px;
    border: 1px solid #484848;
    border-right-color: #6a6a6a;
    border-bottom-color: #6a6a6a;
}
.thumb {
    position: relative;
    width: 99px;
    height: 57px;
    margin: 2px 13px 0 5px;
    border: 1px solid #2a2a2a;
    background: repeating-conic-gradient(#dcdcdc 0 25%, #fff 0 50%) 0 0 / 6px 6px;
}
.thumb.blank {
    background: #fff;
}
.thumb.type-thumb {
    display: flex;
    align-items: center;
    justify-content: center;
    border-color: transparent;
    background: none;
}
.frame {
    position: absolute;
    left: -4px;
    top: -4px;
    width: 106px;
    height: 62px;
}
.shape {
    width: 97px;
    height: 55px;
}
.thumb-j {
    fill: #f4f4f4;
    stroke: #f4f4f4;
    font-family: "Liberation Serif", serif;
    font-size: 30px;
    font-weight: bold;
    text-anchor: middle;
}
.badge {
    position: absolute;
    right: -1px;
    bottom: -1px;
    width: 17px;
    height: 17px;
    background-color: #444;
}
.name {
    flex: 1;
    padding-top: 4px;
    font-size: 12px;
}
.layer-lock {
    width: 17px;
    height: 17px;
    margin-right: 17px;
}
.layers-gutter {
    width: 19px;
    background-color: #4b4b4b;
}
.panel-foot {
    display: flex;
    align-items: center;
    justify-content: flex-end;
    gap: 14px;
    flex: none;
    height: 31px;
    padding-right: 31px;
    border-top: 1px solid #3c3c3c;
}
.panel-foot button {
    position: relative;
    width: 20px;
    height: 24px;
}
.panel-foot svg {
    width: 17px;
    height: 17px;
}
.panel-foot .fx {
    font-size: 16px;
}
.more::after {
    content: "";
    position: absolute;
    right: -1px;
    bottom: 1px;
    border: 2px solid transparent;
    border-top-color: #fff;
}
.taskbar-edge {
    flex: none;
    height: 2px;
    padding: 1px 0 0 60px;
    background-color: #151515;
}
.taskbar-edge span {
    display: block;
    width: 430px;
    height: 1px;
    background-color: #fff;
}
```

FILE: script.js
```js
const SVG = "http://www.w3.org/2000/svg";
const ZOOM = 2 / 3;

function add(parent, name, attrs, text) {
    const el = document.createElementNS(SVG, name);
    for (const key in attrs) {
        el.setAttribute(key, attrs[key]);
    }
    if (text) {
        el.textContent = text;
    }
    parent.appendChild(el);
}

// Each line: [text, x, text, x, ...]
const lines = [
    ["Lorem ipsum dolor sit amet, consectetur adipisicing elit, sed do eiusmod tempor", 287],
    ["incididunt ut labore et dolore magna aliqua. Ut enim ad minim veniam, quis", 287],
    ["nostrud exercitation ullamco laboris nisi ut aliquip ex ea commodo consequat. Duis", 287],
    ["aute irure dolor in reprehenderit in voluptate velit esse cillum dolore eu fugiat", 287],
    ["nulla pariatur. Excepteur sint occaecat cupidatat non proident, sunt in culpa qui", 287],
    ["officia deserunt mollit anim id est laborum. Sed ut perspiciatis unde omnis iste", 287],
    ["natus error sit voluptatem", 287, "accusantium doloremque", 736],
    ["laudantium, totam rem aperiam,", 287, "eaque ipsa quae ab illo", 736],
    ["inventore veritatis et quasi architecto", 287, "beatae vitae dicta sunt explicabo.", 704],
    ["Nemo enim ipsam voluptatem quia", 287, "voluptas sit aspernatur aut odit", 704],
    ["aut fugit, sed quia consequuntur magni", 287, "dolores eos qui ratione", 704],
    ["Lorem ipsum dolor sit amet, consectetur", 287, "adipisicing elit, sed do eiusmod", 704],
    ["tempor incididunt ut labore et dolore", 287, "magna aliqua. Ut enim ad minim", 704],
    ["veniam, quis nostrud", 287, "exercitation", 533, "ullamco laboris nisi ut aliquip ex", 704],
    ["ea commodo consequat.", 287, "Duis", 560, "aute irure dolor in reprehenderit", 704],
    ["in voluptate velit esse", 287, "cillum", 561, "dolore eu fugiat nulla pariatur.", 704],
    ["Excepteur sint occaecat", 287, "cupidatat non proident, sunt in", 703],
    ["culpa qui officia", 287, "deserunt mollit anim id est", 698],
    ["laborum. Sed ut", 287, "perspiciatis unde omnis iste natus", 687],
    ["error sit voluptatem", 287, "accusantium doloremque laudantium,", 667],
    ["totam rem aperiam, eaque ipsa", 287, "quae ab illo inventore veritatis et quasi", 613],
    ["architecto beatae vitae dicta sunt explicabo. Nemo enim ipsam voluptatem quia", 287],
    ["voluptas sit aspernatur aut odit aut fugit, sed quia consequuntur magni dolores eos", 287],
    ["qui ratione voluptatem sequi nesciunt. Neque porro quisquam est, qui dolorem", 287],
    ["ipsum quia dolor sit amet, consectetur, adipisci velit, sed quia non numquam eius", 287],
    ["modi tempora incidunt ut labore et dolore magnam aliquam quaerat voluptatem.", 287]
];
const copy = document.getElementById("copy");
lines.forEach((line, row) => {
    const y = Math.floor(117 + row * 28.8 * ZOOM);
    for (let i = 0; i < line.length; i += 2) {
        add(copy, "text", { x: line[i + 1], y: y }, line[i]);
    }
});

// Anchor points of the text frame
const corners = [[287, 316], [636, 316], [703, 316], [987, 316]];
const anchors = [
    [287, 628], [987, 628], [528, 366], [545, 369], [556, 381], [560, 398], [560, 411],
    [566, 431], [578, 443], [597, 447], [621, 439], [634, 417], [636, 385], [501, 378],
    [490, 409], [503, 449], [539, 480], [594, 491], [647, 482], [683, 457], [700, 424], [703, 386]
];
const handles = document.getElementById("handles");
corners.forEach(([x, y]) => add(handles, "rect", { class: "handle corner", x: x - 3.5, y: y - 3.5, width: 8, height: 8 }));
anchors.forEach(([x, y]) => add(handles, "rect", { class: "handle", x: x - 3, y: y - 3, width: 7, height: 7 }));

// Rulers count document pixels from the artboard's corner
function drawRulers() {
    const board = document.getElementById("artboard").getBoundingClientRect();
    const paste = document.getElementById("pasteboard").getBoundingClientRect();
    const rulerX = document.getElementById("rulerX");
    const rulerY = document.getElementById("rulerY");
    rulerX.innerHTML = "";
    rulerY.innerHTML = "";

    let dx = "M0 20.5H" + paste.width;
    let dy = "M20.5 0V" + paste.height;
    for (let v = -400; v <= 2400; v += 10) {
        const x = Math.round(board.left - paste.left + v * ZOOM) + 0.5;
        const y = Math.round(board.top - paste.top + v * ZOOM) + 0.5;
        const size = v % 100 === 0 ? 21 : v % 50 === 0 ? 7 : 4;
        dx += `M${x} ${21 - size}V21`;
        dy += `M${21 - size} ${y}H21`;
        if (v % 100 === 0) {
            const label = String(Math.abs(v));
            if (x > 0 && x < paste.width) {
                add(rulerX, "text", { x: x + 2, y: 16 }, label);
            }
            [...label].forEach((digit, i) => {
                const base = y + 13 + i * 13;
                if (base > 4 && base < paste.height + 6) {
                    add(rulerY, "text", { x: 2, y: base }, digit);
                }
            });
        }
    }
    add(rulerX, "path", { d: dx });
    add(rulerY, "path", { d: dy });
}
drawRulers();
window.addEventListener("resize", drawRulers);
```
